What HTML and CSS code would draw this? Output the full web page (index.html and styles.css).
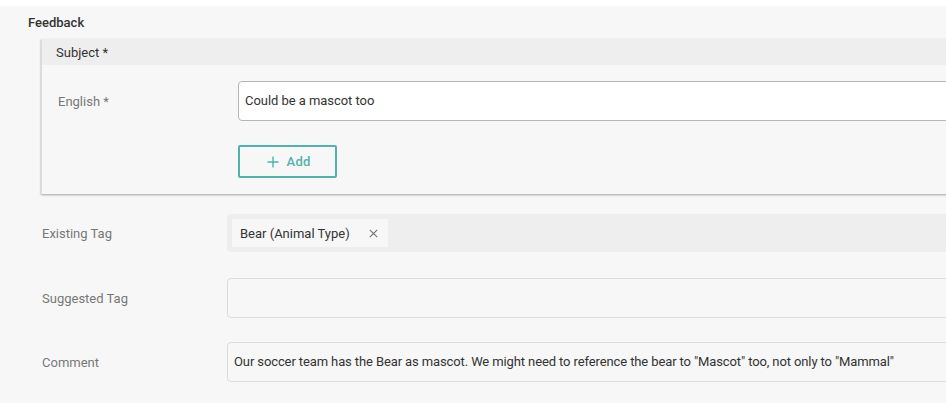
FILE: index.html
```html
<!DOCTYPE html>
<html>
<head>
<meta charset="utf-8">
<link rel="stylesheet" href="styles.css">
</head>
<body>
<div class="panel">
  <div class="title">Feedback</div>
  <div class="card">
    <div class="card-head">Subject *</div>
    <div class="card-body">
      <div class="lang-row">
        <div class="lang-label">English *</div>
        <div class="text-input">Could be a mascot too</div>
      </div>
      <div class="add-row">
        <button class="add-btn">
          <svg class="plus" width="12" height="12" viewBox="0 0 12 12"><path d="M6 0.5V11.5M0.5 6H11.5" stroke="currentColor" stroke-width="1.4" fill="none"/></svg>
          <span>Add</span>
        </button>
      </div>
    </div>
  </div>
  <div class="field-row row-existing">
    <div class="field-label">Existing Tag</div>
    <div class="tag-box">
      <span class="chip">Bear (Animal Type)<svg class="chip-x" width="9" height="9" viewBox="0 0 9 9"><path d="M0.8 0.8L8.2 8.2M8.2 0.8L0.8 8.2" stroke="currentColor" stroke-width="1.2" fill="none"/></svg></span>
    </div>
  </div>
  <div class="field-row row-suggested">
    <div class="field-label">Suggested Tag</div>
    <div class="plain-box"></div>
  </div>
  <div class="field-row">
    <div class="field-label">Comment</div>
    <div class="plain-box comment">Our soccer team has the Bear as mascot. We might need to reference the bear to "Mascot" too, not only to "Mammal"</div>
  </div>
</div>
</body>
</html>
```

FILE: styles.css
```css
html, body {
  margin: 0;
  padding: 0;
  background: #ffffff;
  overflow: hidden;
  font-family: Roboto, "Liberation Sans", Arial, sans-serif;
  font-size: 13px;
  color: #333;
}

.panel {
  margin-top: 6px;
  background: #f7f7f7;
  height: 397px;
  width: 1100px;
}

.title {
  padding-left: 28px;
  height: 33px;
  line-height: 33px;
  font-weight: 500;
  color: #333;
}

.card {
  margin-left: 41px;
  width: 1000px;
  border-left: 1px solid #ddd;
  box-shadow: 0 1px 2px rgba(0, 0, 0, 0.35);
  background: #f7f7f7;
}

.card-head {
  height: 26px;
  line-height: 27px;
  padding-left: 14px;
  background: #eeeeee;
  color: #333;
}

.card-body {
  padding: 16px 0 16px 0;
}

.lang-row {
  display: flex;
  align-items: center;
}

.lang-label {
  width: 180px;
  padding-left: 16px;
  color: #777;
}

.text-input {
  flex: 1;
  height: 38px;
  line-height: 38px;
  padding-left: 6px;
  background: #fff;
  border: 1px solid #b5b5b5;
  border-radius: 4px;
  letter-spacing: -0.05px;
}

.add-row {
  margin-top: 24px;
  padding-left: 196px;
}

.add-btn {
  width: 99px;
  height: 33px;
  border: 2px solid #4fb3ad;
  border-radius: 2px;
  background: transparent;
  color: #4fb3ad;
  font-family: Roboto, "Liberation Sans", Arial, sans-serif;
  font-size: 13px;
  font-weight: 500;
  display: flex;
  align-items: center;
  justify-content: center;
  gap: 8px;
  padding: 0 0 0 2px;
  letter-spacing: 0.2px;
}

.plus {
  display: block;
}

.field-row {
  display: flex;
  align-items: center;
  height: 64px;
  padding-left: 42px;
}

.row-existing {
  margin-top: 7px;
}

.row-suggested {
  margin-top: 1px;
}

.field-label {
  width: 185px;
  color: #777;
}

.tag-box {
  flex: 1;
  height: 38px;
  background: #eeeeee;
  border-radius: 4px;
  display: flex;
  align-items: center;
  padding-left: 5px;
}

.chip {
  height: 28px;
  display: flex;
  align-items: center;
  padding: 0 10px 0 8px;
  background: #f7f7f7;
  color: #333;
  gap: 19px;
}

.chip-x {
  color: #777;
  display: block;
}

.plain-box {
  flex: 1;
  height: 38px;
  line-height: 38px;
  border: 1px solid #dcdcdc;
  border-radius: 4px;
  padding-left: 6px;
  color: #333;
  white-space: nowrap;
}

.comment {
  letter-spacing: -0.11px;
}
```
